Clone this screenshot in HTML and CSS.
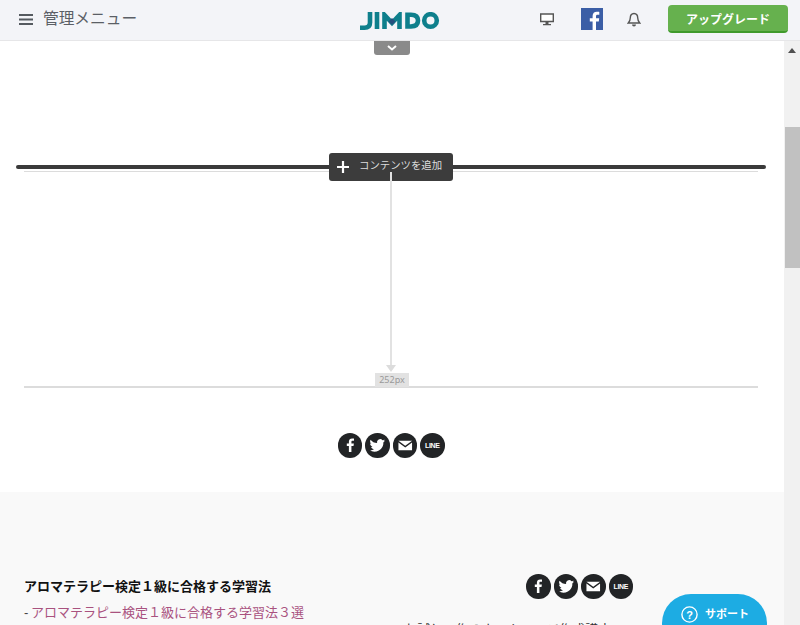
FILE: index.html
```html
<!DOCTYPE html>
<html lang="ja">
<head>
<meta charset="utf-8">
<title>JIMDO</title>
<link rel="stylesheet" href="styles.css">
</head>
<body>
<header class="topbar">
  <div class="menu">
    <svg class="burger" width="14" height="11" viewBox="0 0 14 11"><path d="M0 1h14M0 5.500h14M0 10h14" stroke="#555a60" stroke-width="2"/></svg>
    <span>管理メニュー</span>
  </div>
  <svg class="logo" width="80" height="18" viewBox="0 0 80 18">
    <g fill="none" stroke="#0e7f8c" stroke-width="4.600">
      <path d="M10 0v10.500q0 5.200-5.500 5.200H0"/>
      <path d="M17 0v17"/>
      <path d="M24.500 17V3l7.500 8 7.500-8v14"/>
      <path d="M47.500 2.800h3.500q7 0 7 5.800t-7 5.900h-3.500z"/>
      <circle cx="70.500" cy="8.500" r="6.300"/>
    </g>
    <path d="M32 6l3.500 3.500L32 13l-3.500-3.500z" fill="#25507f"/>
  </svg>
  <div class="tools">
    <svg class="monitor" width="14" height="13" viewBox="0 0 14 13"><path d="M.7 1h12.600v7.500H.7z" fill="#fff" stroke="#555" stroke-width="1.400"/><path d="M5.500 9h3v2h-3zM3 11h8v1.300H3z" fill="#555"/></svg>
    <svg class="fb" width="22" height="22" viewBox="0 0 22 22"><rect width="22" height="22" fill="#3b5ea6"/><path d="M15 22v-8.500h2.800l.4-3.200H15V8.400c0-1 .3-1.600 1.600-1.600h1.700V3.900c-.3 0-1.300-.1-2.500-.1-2.500 0-4.200 1.500-4.200 4.300v2.200H8.800v3.200h2.800V22z" fill="#fff"/></svg>
    <svg class="bell" width="14" height="15" viewBox="0 0 14 15"><path d="M7 1.500c-2.600 0-3.700 2-3.700 4.300 0 2.600-.6 3.700-2 5.200h11.400c-1.400-1.500-2-2.600-2-5.200 0-2.300-1.100-4.300-3.700-4.300z" fill="none" stroke="#555" stroke-width="1.400"/><path d="M5 12.500a2 2 0 0 0 4 0z" fill="#555"/></svg>
    <button class="upgrade">アップグレード</button>
  </div>
</header>
<div class="viewport">
  <main class="page">
    <div class="tab"><svg width="10" height="6" viewBox="0 0 10 6"><path d="M1 1l4 3.500L9 1" fill="none" stroke="#fff" stroke-width="2"/></svg></div>
    <section class="spacer">
      <div class="add-line">
        <div class="add-btn">
          <svg width="14" height="14" viewBox="0 0 14 14"><path d="M7 1v12M1 7h12" stroke="#fff" stroke-width="2.200"/></svg>
          <span>コンテンツを追加</span>
        </div>
      </div>
      <div class="measure">
        <div class="arrow-line"></div>
        <div class="arrow-head"></div>
        <div class="px-label">252px</div>
      </div>
    </section>
    <div class="share share-main">
      <span class="sns"><svg viewBox="0 0 27 27"><use href="#i-f"/></svg></span>
      <span class="sns"><svg viewBox="0 0 27 27"><use href="#i-t"/></svg></span>
      <span class="sns"><svg viewBox="0 0 27 27"><use href="#i-m"/></svg></span>
      <span class="sns sns-line">LINE</span>
    </div>
    <footer class="foot">
      <div class="foot-left">
        <h3>アロマテラピー検定１級に合格する学習法</h3>
        <p>- <a href="#">アロマテラピー検定１級に合格する学習法３選</a></p>
      </div>
      <div class="foot-right">
        <div class="share">
          <span class="sns"><svg viewBox="0 0 27 27"><use href="#i-f"/></svg></span>
          <span class="sns"><svg viewBox="0 0 27 27"><use href="#i-t"/></svg></span>
          <span class="sns"><svg viewBox="0 0 27 27"><use href="#i-m"/></svg></span>
          <span class="sns sns-line">LINE</span>
        </div>
        <p class="foot-cut">お試しで作るホームページ作成講座</p>
      </div>
    </footer>
  </main>
  <div class="scrollbar">
    <div class="sb-up"></div>
    <div class="sb-thumb"></div>
  </div>
</div>
<button class="support">
  <svg width="17" height="17" viewBox="0 0 17 17"><circle cx="8.500" cy="8.500" r="7.600" fill="none" stroke="#fff" stroke-width="1.400"/><text x="8.500" y="12.500" class="q">?</text></svg>
  <span>サポート</span>
</button>
<svg class="defs" width="0" height="0">
  <defs>
    <g id="i-f"><path d="M14.800 21v-6.800h2.300l.4-2.700h-2.700V9.800c0-.8.200-1.300 1.300-1.300h1.500V6.100c-.3 0-1.100-.1-2.100-.1-2.100 0-3.500 1.300-3.500 3.600v1.900H9.700v2.700h2.300V21z" fill="#fff"/></g>
    <g id="i-t"><path d="M22 8.400c-.6.300-1.300.5-2 .6.700-.4 1.300-1.100 1.500-1.900-.7.400-1.400.7-2.200.8a3.500 3.500 0 0 0-6 3.200c-2.900-.1-5.500-1.500-7.200-3.700-.9 1.600-.5 3.700 1.100 4.700-.6 0-1.100-.2-1.600-.4 0 1.700 1.200 3.100 2.800 3.500-.5.100-1 .2-1.600.1.400 1.400 1.700 2.400 3.300 2.400A7 7 0 0 1 5 19.100a10 10 0 0 0 15.300-8.800c.7-.5 1.300-1.100 1.700-1.900z" fill="#fff"/></g>
    <g id="i-m"><path d="M6 8.500h15l-7.500 5.500z" fill="#fff"/><path d="M6 10.500v8.500h15v-8.500l-7.500 5.500z" fill="#fff"/></g>
  </defs>
</svg>
</body>
</html>
```
FILE: styles.css
```css
* { box-sizing: border-box; }
html, body { margin: 0; height: 100%; overflow: hidden; }
body {
  width: 800px;
  height: 625px;
  background: #fff;
  font-family: "Liberation Sans", "Noto Sans CJK JP", sans-serif;
  display: flex;
  flex-direction: column;
  position: relative;
}
.topbar {
  flex: 0 0 41px;
  height: 41px;
  background: #f3f4f8;
  border-bottom: 1px solid #e6e6e8;
  display: flex;
  align-items: center;
  position: relative;
  padding: 0 12px 2px 19px;
  z-index: 2;
}
.menu {
  display: flex;
  align-items: center;
  gap: 10px;
  font-size: 15.700px;
  line-height: 20px;
  color: #5b5f66;
}
.burger { display: block; }
.logo {
  position: absolute;
  left: 360px;
  top: 12px;
}
.tools {
  margin-left: auto;
  display: flex;
  align-items: center;
}
.monitor { margin-right: 27px; }
.fb { margin-right: 24px; }
.bell { margin-right: 27px; }
.upgrade {
  width: 120px;
  height: 28px;
  border: 0;
  border-bottom: 2px solid #3f9a2c;
  border-radius: 4px;
  background: #66b14e;
  color: #fff;
  font: bold 12px "Liberation Sans", "Noto Sans CJK JP", sans-serif;
  padding: 0;
}
.viewport {
  flex: 1;
  display: flex;
  min-height: 0;
}
.page {
  width: 784px;
  position: relative;
  overflow: hidden;
}
.tab {
  position: absolute;
  left: 374px;
  top: 0;
  width: 36px;
  height: 14px;
  background: #8a8a8a;
  border-radius: 0 0 3px 3px;
  display: flex;
  justify-content: center;
  align-items: center;
}
.spacer {
  padding: 124px 26px 0 24px;
}
.add-line {
  height: 7px;
  border-bottom: 1px solid #dcdcdc;
  position: relative;
}
.add-line::before {
  content: "";
  position: absolute;
  left: -8px;
  right: -8px;
  top: 0;
  height: 4px;
  background: #3a3a3a;
  border-radius: 2px;
}
.add-btn {
  position: absolute;
  left: 305px;
  top: -12px;
  width: 124px;
  height: 28px;
  background: #3c3c3c;
  border-radius: 3px;
  display: flex;
  align-items: center;
  padding-left: 7px;
  gap: 9px;
  color: #ddd;
  font-size: 10.400px;
}
.add-btn span {
  line-height: 14px;
  margin-top: -3px;
}
.measure {
  height: 216px;
  border-bottom: 2px solid #dcdcdc;
  position: relative;
}
.arrow-line {
  position: absolute;
  left: 366px;
  top: 0;
  width: 2px;
  height: 196px;
  background: #e2e2e2;
}
.arrow-head {
  position: absolute;
  left: 362px;
  top: 193px;
  width: 0;
  height: 0;
  border-left: 5px solid transparent;
  border-right: 5px solid transparent;
  border-top: 7px solid #dcdcdc;
}
.px-label {
  position: absolute;
  left: 351px;
  bottom: -1px;
  width: 34px;
  height: 14px;
  background: #e2e2e2;
  color: #999;
  font-family: "Noto Sans", sans-serif;
  font-size: 9px;
  line-height: 14px;
  text-align: center;
}
.share {
  display: flex;
  gap: 3px;
}
.share-main {
  justify-content: center;
  margin-top: 45px;
  padding-right: 2px;
}
.sns {
  width: 24.500px;
  height: 24.500px;
  border-radius: 50%;
  background: #222426;
  display: flex;
  align-items: center;
  justify-content: center;
  overflow: hidden;
  flex: none;
}
.sns svg {
  display: block;
  width: 24.500px;
  height: 24.500px;
}
.sns-line {
  color: #fff;
  font-size: 7px;
  font-weight: bold;
  letter-spacing: -.4px;
}
.foot {
  position: absolute;
  left: 0;
  right: 0;
  top: 451px;
  height: 200px;
  background: #f9f9f9;
  display: grid;
  grid-template-columns: 392px 392px;
  padding-top: 85px;
}
.foot-left { padding-left: 24px; }
.foot-left h3 {
  margin: 0;
  font-size: 13px;
  line-height: 20px;
  color: #111;
}
.foot-left p {
  margin: 6px 0 0;
  font-size: 13px;
  line-height: 20px;
  color: #444;
}
.foot-left a {
  color: #a9527f;
  text-decoration: none;
  margin-left: -1px;
}
.foot-right {
  display: flex;
  flex-direction: column;
  align-items: flex-start;
}
.foot-right .share { margin-left: 134px; margin-top: -3px; }
.foot-cut {
  margin: 22px 0 0 12px;
  font-size: 13px;
  line-height: 18px;
  color: #333;
  white-space: nowrap;
}
.scrollbar {
  width: 16px;
  background: #f1f1f1;
  position: relative;
}
.sb-up {
  position: absolute;
  left: 3.500px;
  top: 7px;
  width: 0;
  height: 0;
  border-left: 4.500px solid transparent;
  border-right: 4.500px solid transparent;
  border-bottom: 5px solid #505050;
}
.sb-thumb {
  position: absolute;
  left: 1px;
  right: 0;
  top: 86px;
  height: 141px;
  background: #c1c1c1;
}
.support {
  position: absolute;
  left: 662px;
  top: 594px;
  width: 105px;
  height: 58px;
  border: 0;
  border-radius: 29px;
  background: #1dace3;
  color: #fff;
  font: bold 11px "Liberation Sans", "Noto Sans CJK JP", sans-serif;
  display: flex;
  align-items: flex-start;
  padding: 12px 0 0 19px;
  gap: 7px;
}
.support span { line-height: 17px; }
.q {
  fill: #fff;
  font: bold 11px "Liberation Sans", sans-serif;
  text-anchor: middle;
}
.defs { position: absolute; }
```
